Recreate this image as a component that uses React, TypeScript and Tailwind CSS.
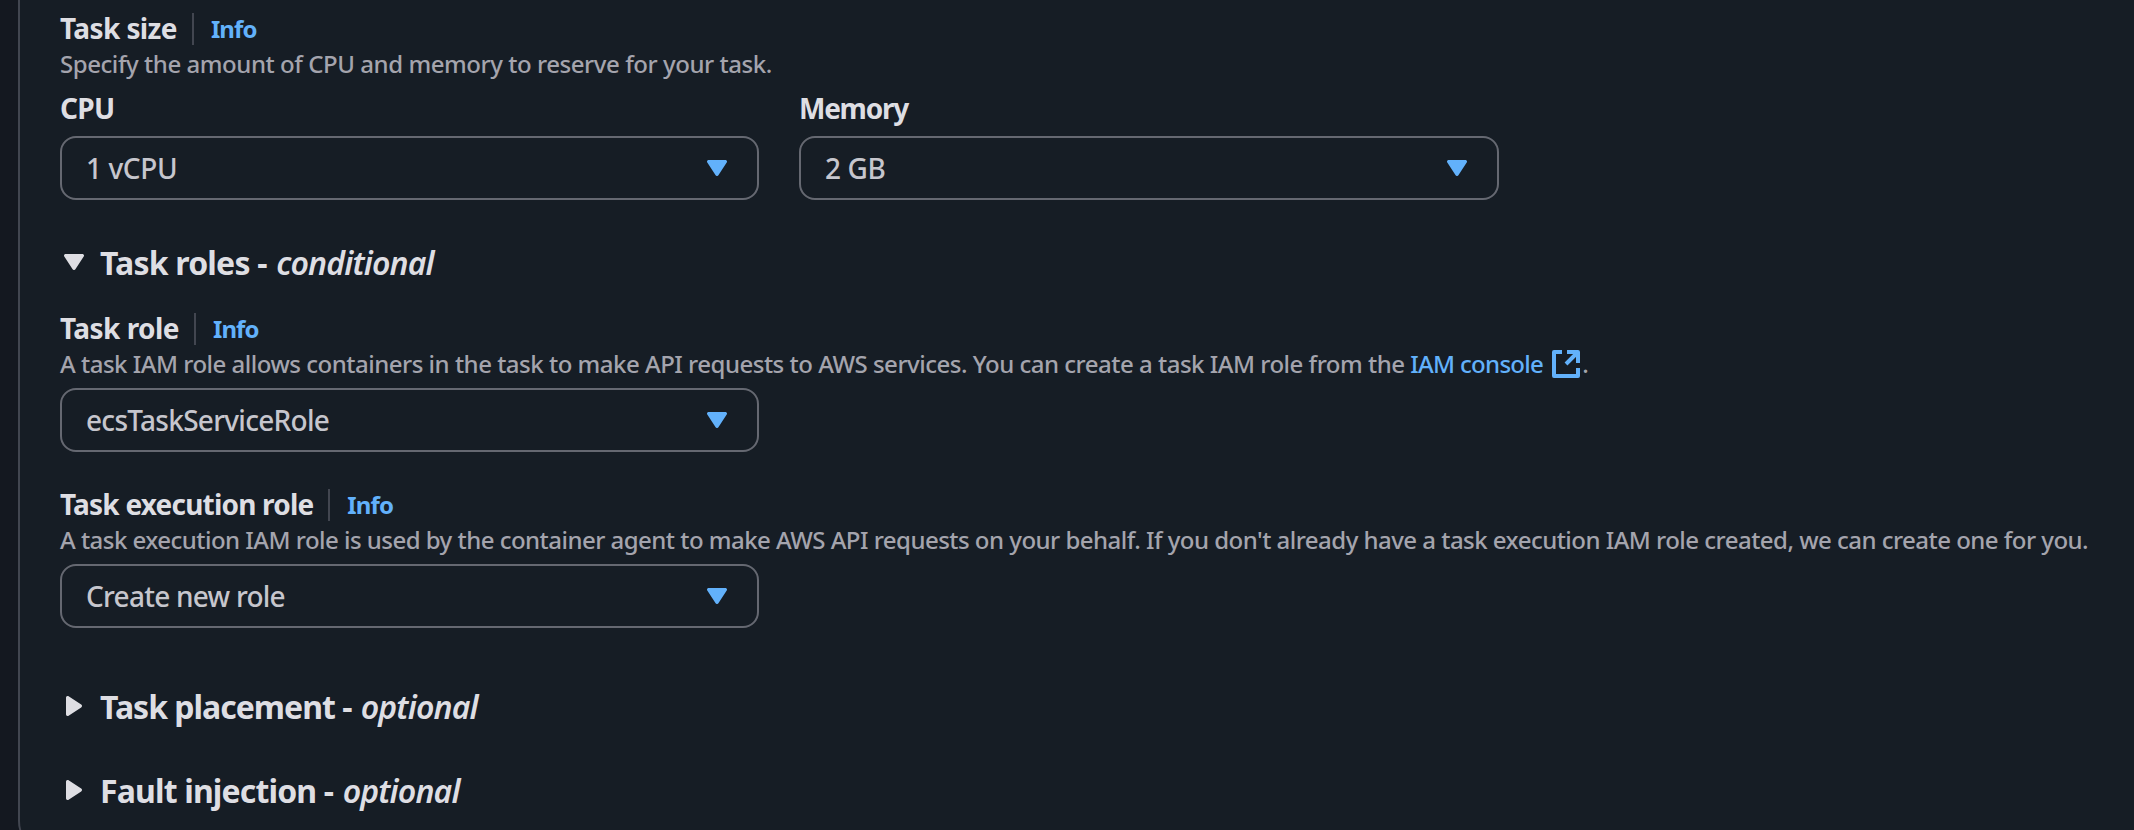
import type { ReactNode } from 'react';

function CaretDown({ className }: { className: string }) {
  return (
    <svg viewBox="0 0 20 16" className={`h-4 w-5 shrink-0 ${className}`} fill="currentColor">
      <path d="M1.7 0h16.6c1.4 0 2.2 1.5 1.4 2.6l-8.3 12.6c-.7 1.1-2.1 1.1-2.8 0L.3 2.6C-.5 1.5.3 0 1.7 0z" />
    </svg>
  );
}

function CaretRight({ className }: { className: string }) {
  return (
    <svg viewBox="0 0 16 20" className={`h-5 w-4 shrink-0 ${className}`} fill="currentColor">
      <path d="M0 1.7v16.6c0 1.4 1.5 2.2 2.6 1.4l12.6-8.3c1.1-.7 1.1-2.1 0-2.8L2.6.3C1.5-.5 0 .3 0 1.7z" />
    </svg>
  );
}

function ExternalIcon() {
  return (
    <svg viewBox="0 0 28 28" className="ml-[9px] mt-[2px] size-7 shrink-0 text-[#62b1fb]" fill="none" stroke="currentColor" strokeWidth="4" strokeLinejoin="round">
      <path d="M10 2H2v24h24v-8" />
      <path d="M15 2h11v11M26 2 14 14" />
    </svg>
  );
}

function Label({ children, info, className }: { children: ReactNode; info?: boolean; className: string }) {
  return (
    <div className="flex h-10 items-baseline text-[28px] leading-10 font-bold text-[#dedee3]">
      <span className={className}>{children}</span>
      {info && (
        <>
          <span className="mt-[5px] ml-[15px] h-8 w-[2px] self-start bg-[#424650]" />
          <a className="ml-[17px] -translate-y-px text-2xl leading-8 tracking-[-0.9px] text-[#62b1fb]">Info</a>
        </>
      )}
    </div>
  );
}

function Description({ children, className }: { children: ReactNode; className: string }) {
  return <p className={`flex h-8 text-2xl leading-8 font-medium whitespace-nowrap text-[#a4a4ad] ${className}`}>{children}</p>;
}

function Select({ value, className }: { value: string; className: string }) {
  return (
    <div className="flex h-16 items-center justify-between rounded-2xl border-2 border-[#656871] pr-[30px] pl-6 text-[28px] font-medium text-[#c6c6cd]">
      <span className={`pb-px leading-10 ${className}`}>{value}</span>
      <CaretDown className="text-[#62b1fb]" />
    </div>
  );
}

function SectionHeading({ title, note, open, className }: { title: string; note: string; open?: boolean; className: string }) {
  return (
    <h2 className="flex h-10 items-center text-[32px] leading-10 font-bold text-[#dedee3]">
      <span className="flex w-10 items-center pb-[2px]">
        {open ? <CaretDown className="ml-1" /> : <CaretRight className="ml-[6px]" />}
      </span>
      <span className={`whitespace-pre ${className}`}>{title} - </span>
      <em className="ml-[2px] font-semibold tracking-[-0.85px]">{note}</em>
    </h2>
  );
}

export default function App() {
  return (
    <div className="h-[830px] w-[2134px] overflow-hidden bg-[#141820] pl-[18px] font-['Noto_Sans',sans-serif]">
      <div className="flex h-[853px] flex-col rounded-bl-[32px] border-l-2 border-[#424650] bg-[#161d25] pt-2 pl-10">
        <section>
          <Label info className="tracking-[-0.6px]">Task size</Label>
          <Description className="tracking-[-0.444px]">Specify the amount of CPU and memory to reserve for your task.</Description>
          <div className="mt-2 flex gap-10">
            <div className="w-[699px]">
              <Label className="tracking-[-0.7px]">CPU</Label>
              <div className="mt-2"><Select value="1 vCPU" className="tracking-[-0.4px]" /></div>
            </div>
            <div className="w-[700px]">
              <Label className="tracking-[-1.25px]">Memory</Label>
              <div className="mt-2"><Select value="2 GB" className="tracking-[-0.4px]" /></div>
            </div>
          </div>
        </section>

        <div className="mt-[43px]">
          <SectionHeading open title="Task roles" note="conditional" className="tracking-[-0.8px]" />
        </div>

        <section className="mt-[25px]">
          <Label info className="tracking-[-0.55px]">Task role</Label>
          <Description className="tracking-[-0.495px]">
            <span className="whitespace-pre">A task IAM role allows containers in the task to make API requests to AWS services. You can create a task IAM role from the </span>
            <a className="flex tracking-[-0.7px] text-[#62b1fb]">IAM console<ExternalIcon /></a>
            <span className="ml-[2px]">.</span>
          </Description>
          <div className="mt-2 w-[699px]"><Select value="ecsTaskServiceRole" className="tracking-[-0.72px]" /></div>
        </section>

        <section className="mt-8">
          <Label info className="tracking-[-0.8px]">Task execution role</Label>
          <Description className="tracking-[-0.525px]">
            A task execution IAM role is used by the container agent to make AWS API requests on your behalf. If you don't already have a task execution IAM role created, we can create one for you.
          </Description>
          <div className="mt-2 w-[699px]"><Select value="Create new role" className="tracking-[-0.75px]" /></div>
        </section>

        <div className="mt-[59px]">
          <SectionHeading title="Task placement" note="optional" className="tracking-[-1px]" />
        </div>
        <div className="mt-11">
          <SectionHeading title="Fault injection" note="optional" className="tracking-[-0.85px]" />
        </div>
      </div>
    </div>
  );
}
